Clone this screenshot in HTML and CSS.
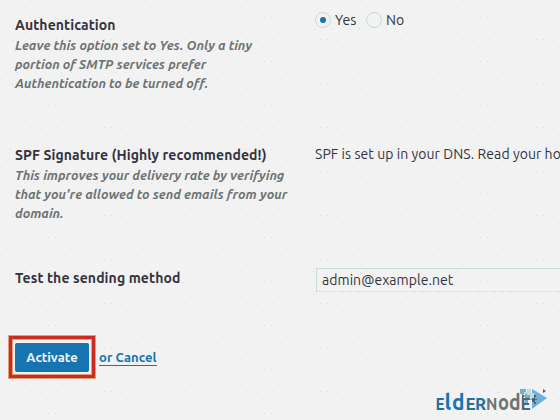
FILE: index.html
```html
<!DOCTYPE html>
<html lang="en">
<head>
<meta charset="utf-8">
<title>SMTP settings</title>
<link rel="stylesheet" href="styles.css">
</head>
<body>
<main class="settings">
  <section class="row auth">
    <div class="info">
      <h2>Authentication</h2>
      <p>Leave this option set to Yes. Only a tiny<br>portion of SMTP services prefer<br>Authentication to be turned off.</p>
    </div>
    <div class="choices"><span class="radio checked"></span><span class="yes">Yes</span><span class="radio"></span><span>No</span></div>
  </section>
  <section class="row spf">
    <div class="info">
      <h2>SPF Signature (Highly recommended!)</h2>
      <p>This improves your delivery rate by verifying<br>that you're allowed to send emails from your<br>domain.</p>
    </div>
    <div class="status">SPF is set up in your DNS. Read your ho</div>
  </section>
  <section class="row test">
    <div class="info"><h2>Test the sending method</h2></div>
    <div class="field">admin@example.net</div>
  </section>
  <div class="actions"><div class="highlight"><a class="button">Activate</a></div><a class="cancel">or Cancel</a></div>
</main>
<svg class="logo" width="125" height="30" viewBox="0 0 125 30">
  <path d="M96 4l15 9-15 11z" fill="#6eafdb"/>
  <path d="M84 4h6v3h4v4h3v4h-5v3h-3V9h-5z" fill="#6eafdb"/>
  <path d="M91 4h4v4h3v6h-4v-4h-3zM88 7h3v2h-3z" fill="#c5dcda"/>
  <path d="M86 9l3 2-3 3zM107 4l3 2-3 2zM98 10h2v2h-1v2h2v1h-2v2h1v2h-2v-2h-2v-4h2z" fill="#52656f"/>
  <g class="wordmark">
    <text class="blue-dark" transform="translate(-.5 25) scale(.9 1)" font-size="17">E</text>
    <text class="blue" transform="translate(8.5 25)" font-size="22">l</text>
    <text class="blue" transform="translate(16 25) scale(.95 1)" font-size="22">d</text>
    <text class="blue-dark" transform="translate(29.5 25)" font-size="17">E</text>
    <text class="blue-dark" transform="translate(39 25)" font-size="17">R</text>
    <text class="gray" transform="translate(50 25) scale(.9 1)" font-size="17">N</text>
    <text class="gray" transform="translate(62 25) scale(.83 1)" font-size="22">o</text>
    <text class="gray" transform="translate(73 25) scale(.88 1)" font-size="22">d</text>
    <text class="slate" transform="translate(84.5 25)" font-size="17">E</text>
  </g>
</svg>
<svg class="dots" width="560" height="420">
  <defs><pattern id="speckle" width="54" height="44" patternUnits="userSpaceOnUse">
    <path d="M5 6h1v1h-1zM14 6h1v1h-1zM24 7h1v1h-1zM33 6h1v1h-1zM43 7h1v1h-1zM50 6h1v1h-1zM1 17h1v1h-1zM10 17h1v1h-1zM20 18h1v1h-1zM29 17h1v1h-1zM39 17h1v1h-1zM48 17h1v1h-1zM7 28h1v1h-1zM17 28h1v1h-1zM25 29h1v1h-1zM35 28h1v1h-1zM45 29h1v1h-1zM2 39h1v1h-1zM12 40h1v1h-1zM22 39h1v1h-1zM31 39h1v1h-1zM40 40h1v1h-1zM50 39h1v1h-1z" fill="#c5dcda"/>
  </pattern></defs>
  <rect width="560" height="420" fill="url(#speckle)"/>
</svg>
</body>
</html>
```
FILE: styles.css
```css
* { box-sizing: border-box; }
body {
  margin: 0;
  width: 560px;
  height: 420px;
  overflow: hidden;
  background: #f2f2f2;
  color: #32323e;
  font-family: Ubuntu, "Noto Sans", sans-serif;
  font-size: 14px;
  position: relative;
}
.settings { padding: 15px 0 0 15px; height: 420px; position: relative; z-index: 1; }
.row { display: grid; grid-template-columns: 300px 245px; align-items: start; }
.auth { height: 130px; }
.spf { height: 123px; }
.test { height: 67px; }
h2 { margin: 0; font-size: 14px; line-height: 20px; font-weight: 700; white-space: nowrap; letter-spacing: 0.1px; }
p { margin: 1px 0 0; font-size: 13px; line-height: 19px; font-weight: 700; font-style: italic; color: #6d7372; white-space: nowrap; letter-spacing: 0.03px; }
.choices { display: flex; align-items: center; height: 20px; margin-top: -5px; }
.radio { width: 16px; height: 16px; border: 1px solid #c5dcda; border-radius: 50%; margin-right: 4px; display: grid; place-items: center; }
.checked::before { content: ""; width: 6px; height: 6px; border-radius: 50%; background: #1674b0; }
.yes { width: 31px; }
.status { line-height: 20px; margin-top: -1px; white-space: nowrap; letter-spacing: 0.06px; }
.field { height: 24px; margin: 0 0 0 1px; border: 1px solid #c5dcda; border-right: 0; border-bottom-style: dotted; padding-left: 5px; line-height: 22px; letter-spacing: 0.06px; }
.actions { display: flex; align-items: center; margin-left: -7px; gap: 3px; }
.highlight { width: 88px; height: 44px; border: 1px solid #df9f79; background: #f2f2f2; box-shadow: inset 0 0 0 3px #cc2c20, inset 0 0 0 4px #df9f79; padding: 7px 6px 6px; }
.button { display: block; height: 29px; line-height: 28px; border-radius: 2px; background: #1674b0; color: #f2f2f2; text-align: center; font-size: 13px; font-weight: 700; }
.cancel { color: #1674b0; font-size: 13px; font-weight: 700; line-height: 15px; margin-top: 1px; border-bottom: 1px solid #1674b0; letter-spacing: 0.08px; }
.logo { position: absolute; left: 436px; top: 385px; z-index: 1; }
.wordmark { font-family: Ubuntu, "Noto Sans", sans-serif; font-weight: 700; }
.blue { fill: #1674b0; }
.blue-dark { fill: #236e9e; }
.gray { fill: #6d7372; }
.slate { fill: #52656f; }
.dots { position: absolute; left: 0; top: 0; opacity: .75; }
```
